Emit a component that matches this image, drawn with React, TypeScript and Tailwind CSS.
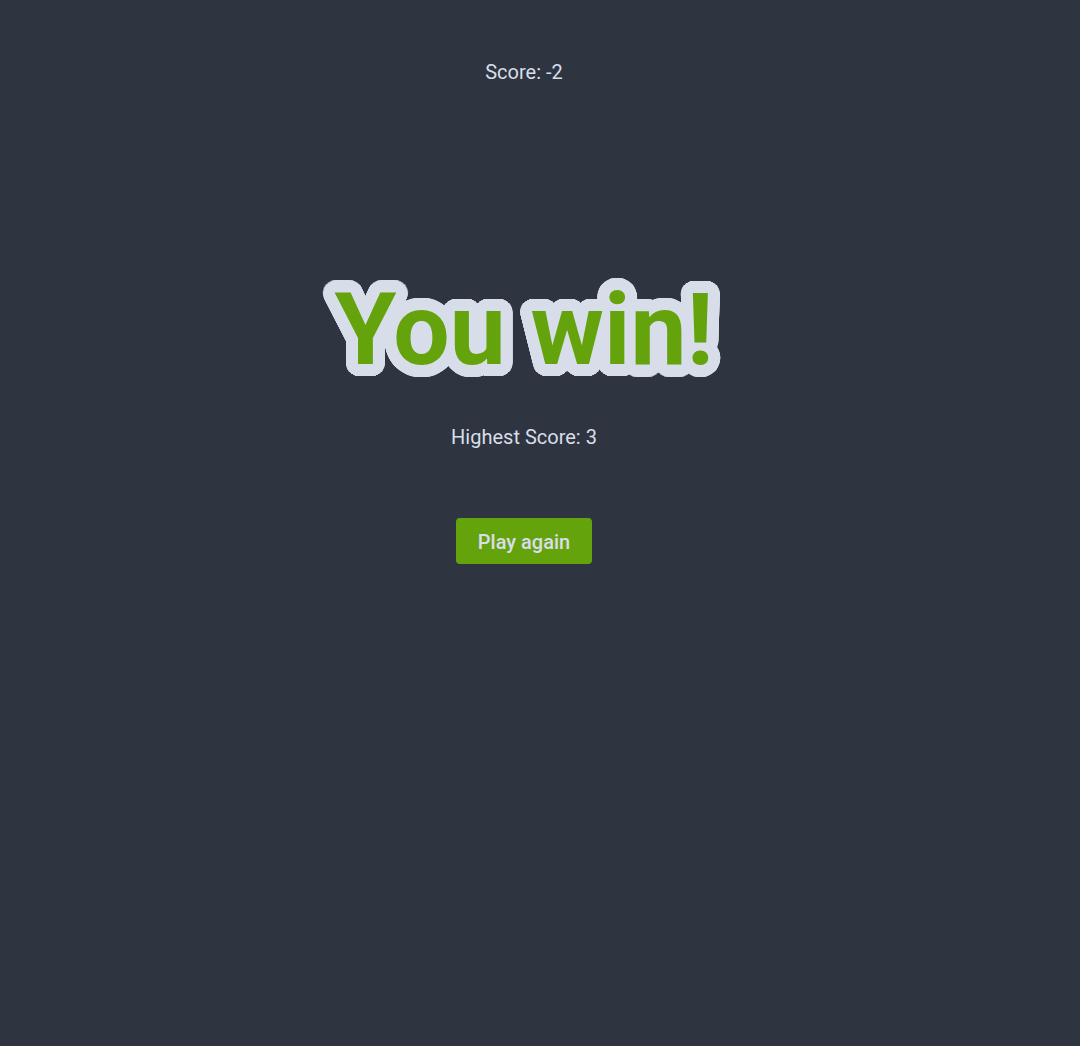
import React from "react";

// round outline around the title: a ring of text shadows
function ringShadow(radius: number, color: string) {
  const parts: string[] = [];
  for (let r = 2; r <= radius; r += 2) {
    const steps = Math.max(16, Math.round(r * 6));
    for (let i = 0; i < steps; i++) {
      const a = (i / steps) * Math.PI * 2;
      parts.push(`${(Math.cos(a) * r).toFixed(2)}px ${(Math.sin(a) * r).toFixed(2)}px 0 ${color}`);
    }
  }
  return parts.join(", ");
}

const titleShadow = ringShadow(12, "#d8dee9");

export default function App() {
  const score = -2;
  const best = 3;

  return (
    <main className="min-h-screen bg-[#2e3440] text-[#d8dee9] font-['Roboto',sans-serif]">
      <div className="flex flex-col items-center pr-[32px] pt-[58px]">
        <p className="text-xl leading-7">Score: {score}</p>

        <h1
          className="mt-[194px] text-[100px] leading-none font-bold text-[#65a30d]"
          style={{ textShadow: titleShadow }}
        >
          You win!
        </h1>

        <p className="mt-[43px] text-xl leading-7">Highest Score: {best}</p>

        <button className="mt-[67px] h-[46px] px-[22px] pt-px rounded bg-[#65a30d] text-xl font-medium text-[#d8dee9]">
          Play again
        </button>
      </div>
    </main>
  );
}
